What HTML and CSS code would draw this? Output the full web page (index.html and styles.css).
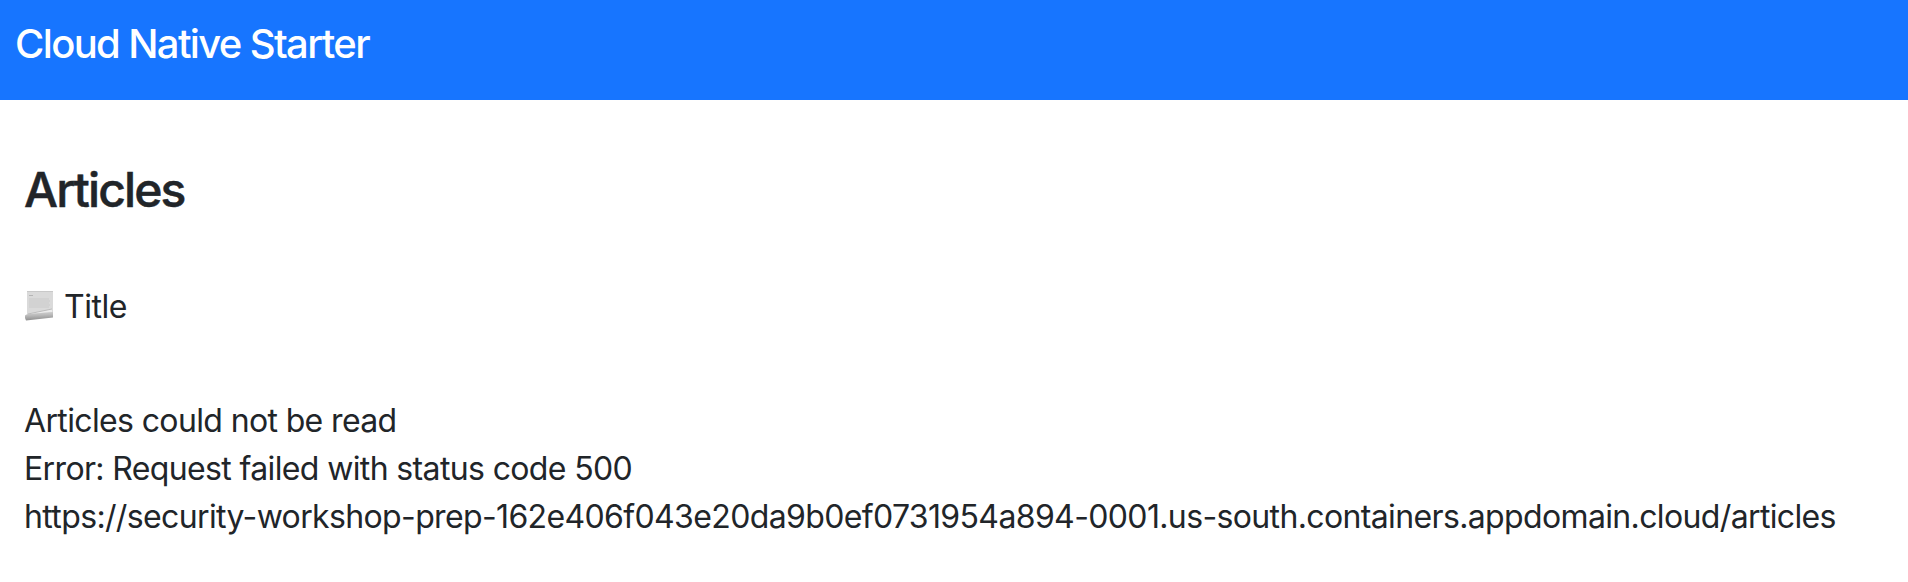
FILE: index.html
```html
<!DOCTYPE html>
<html lang="en">
<head>
<meta charset="utf-8">
<title>Cloud Native Starter</title>
<link rel="stylesheet" href="styles.css">
</head>
<body>
<header class="navbar"><span class="brand">Cloud Native Starter</span></header>
<main class="content">
  <h1 class="heading">Articles</h1>
  <div class="title-row">
    <svg class="page-icon" viewBox="0 0 32 32" aria-hidden="true">
      <defs>
        <linearGradient id="roll" x1="0" y1="0" x2="0.12" y2="1">
          <stop offset="0" stop-color="#d2d2d2"/>
          <stop offset="0.4" stop-color="#bcbcbc"/>
          <stop offset="1" stop-color="#8f8f8f"/>
        </linearGradient>
      </defs>
      <path d="M3 2h26v24L3 28z" fill="#dadada"/>
      <path d="M3 2.5h26" stroke="#c9c9c9"/>
      <path d="M5 6.5h4" stroke="#b5b5b5"/>
      <path d="M5 10h20M5 12h21M5 14h20M5 16h21M5 18h20" stroke="#cacaca"/>
      <path d="M4 25l24-5v3z" fill="#ececec"/>
      <path d="M4 25l24-5" stroke="#b3b3b3" stroke-width=".8"/>
      <path d="M1 26.5Q2 25 5 25l24-2v5.5L2 31.5Q.5 29 1 26.5z" fill="url(#roll)"/>
    </svg>
    <span class="title">Title</span>
  </div>
  <div class="message">
    <div>Articles could not be read</div>
    <div>Error: Request failed with status code 500</div>
    <div>https://security-workshop-prep-162e406f043e20da9b0ef0731954a894-0001.us-south.containers.appdomain.cloud/articles</div>
  </div>
</main>
</body>
</html>
```
FILE: styles.css
```css
* { box-sizing: border-box; }
body { margin: 0; background: #fff; color: #212529; font-family: Inter, "Liberation Sans", sans-serif; font-size: 32px; line-height: 48px; }
.navbar { height: 100px; background: #1775ff; color: #fff; padding: 14px 15px; font-size: 40px; font-weight: 450; line-height: 60px; letter-spacing: -1.64px; }
.content { padding: 60px 24px 0; white-space: nowrap; }
.heading { margin: 0; font-size: 48px; line-height: 59px; font-weight: 500; letter-spacing: -1.9px; -webkit-text-stroke: 0.5px #212529; }
.title-row { display: flex; align-items: center; gap: 8px; height: 48px; margin-top: 64px; letter-spacing: -0.5px; }
.page-icon { width: 32px; height: 32px; margin-top: -5px; }
.message { margin-top: 66px; letter-spacing: -0.635px; }
```
